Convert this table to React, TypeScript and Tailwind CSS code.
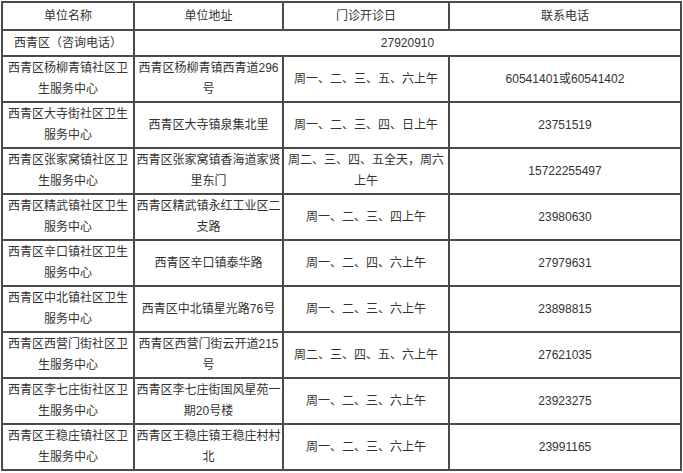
const rows: [string, string, string, string][] = [
  ["西青区杨柳青镇社区卫生服务中心", "西青区杨柳青镇西青道296号", "周一、二、三、五、六上午", "60541401或60541402"],
  ["西青区大寺街社区卫生服务中心", "西青区大寺镇泉集北里", "周一、二、三、四、日上午", "23751519"],
  ["西青区张家窝镇社区卫生服务中心", "西青区张家窝镇香海道家贤里东门", "周二、三、四、五全天，周六上午", "15722255497"],
  ["西青区精武镇社区卫生服务中心", "西青区精武镇永红工业区二支路", "周一、二、三、四上午", "23980630"],
  ["西青区辛口镇社区卫生服务中心", "西青区辛口镇泰华路", "周一、二、四、六上午", "27979631"],
  ["西青区中北镇社区卫生服务中心", "西青区中北镇星光路76号", "周一、二、三、六上午", "23898815"],
  ["西青区西营门街社区卫生服务中心", "西青区西营门街云开道215号", "周二、三、四、五、六上午", "27621035"],
  ["西青区李七庄街社区卫生服务中心", "西青区李七庄街国风星苑一期20号楼", "周一、二、三、六上午", "23923275"],
  ["西青区王稳庄镇社区卫生服务中心", "西青区王稳庄镇王稳庄村村北", "周一、二、三、六上午", "23991165"],
];

const cell = "border border-[#4a4a4a] px-[1px] py-[1px] text-center align-middle font-normal";

export default function App() {
  return (
    <div className="min-h-screen bg-white pl-[1px] pt-[1px] text-[12px] leading-[21px] text-[#333] font-['Liberation_Sans','Noto_Sans_CJK_SC',sans-serif]">
      <table className="w-[679px] table-fixed border-separate border-spacing-0 border border-[#4a4a4a]">
        <colgroup>
          <col className="w-[132px]" />
          <col className="w-[149px]" />
          <col className="w-[166px]" />
          <col className="w-[232px]" />
        </colgroup>
        <thead>
          <tr className="h-[28px]">
            <th className={cell}>单位名称</th>
            <th className={cell}>单位地址</th>
            <th className={cell}>门诊开诊日</th>
            <th className={cell}>联系电话</th>
          </tr>
        </thead>
        <tbody>
          <tr className="h-[26px]">
            <td className={cell}>西青区（咨询电话）</td>
            <td className={cell} colSpan={3}>
              27920910
            </td>
          </tr>
          {rows.map((r) => (
            <tr key={r[0]} className="h-[46px]">
              <td className={cell}>{r[0]}</td>
              <td className={cell}>{r[1]}</td>
              <td className={cell}>{r[2]}</td>
              <td className={cell}>{r[3]}</td>
            </tr>
          ))}
        </tbody>
      </table>
    </div>
  );
}
